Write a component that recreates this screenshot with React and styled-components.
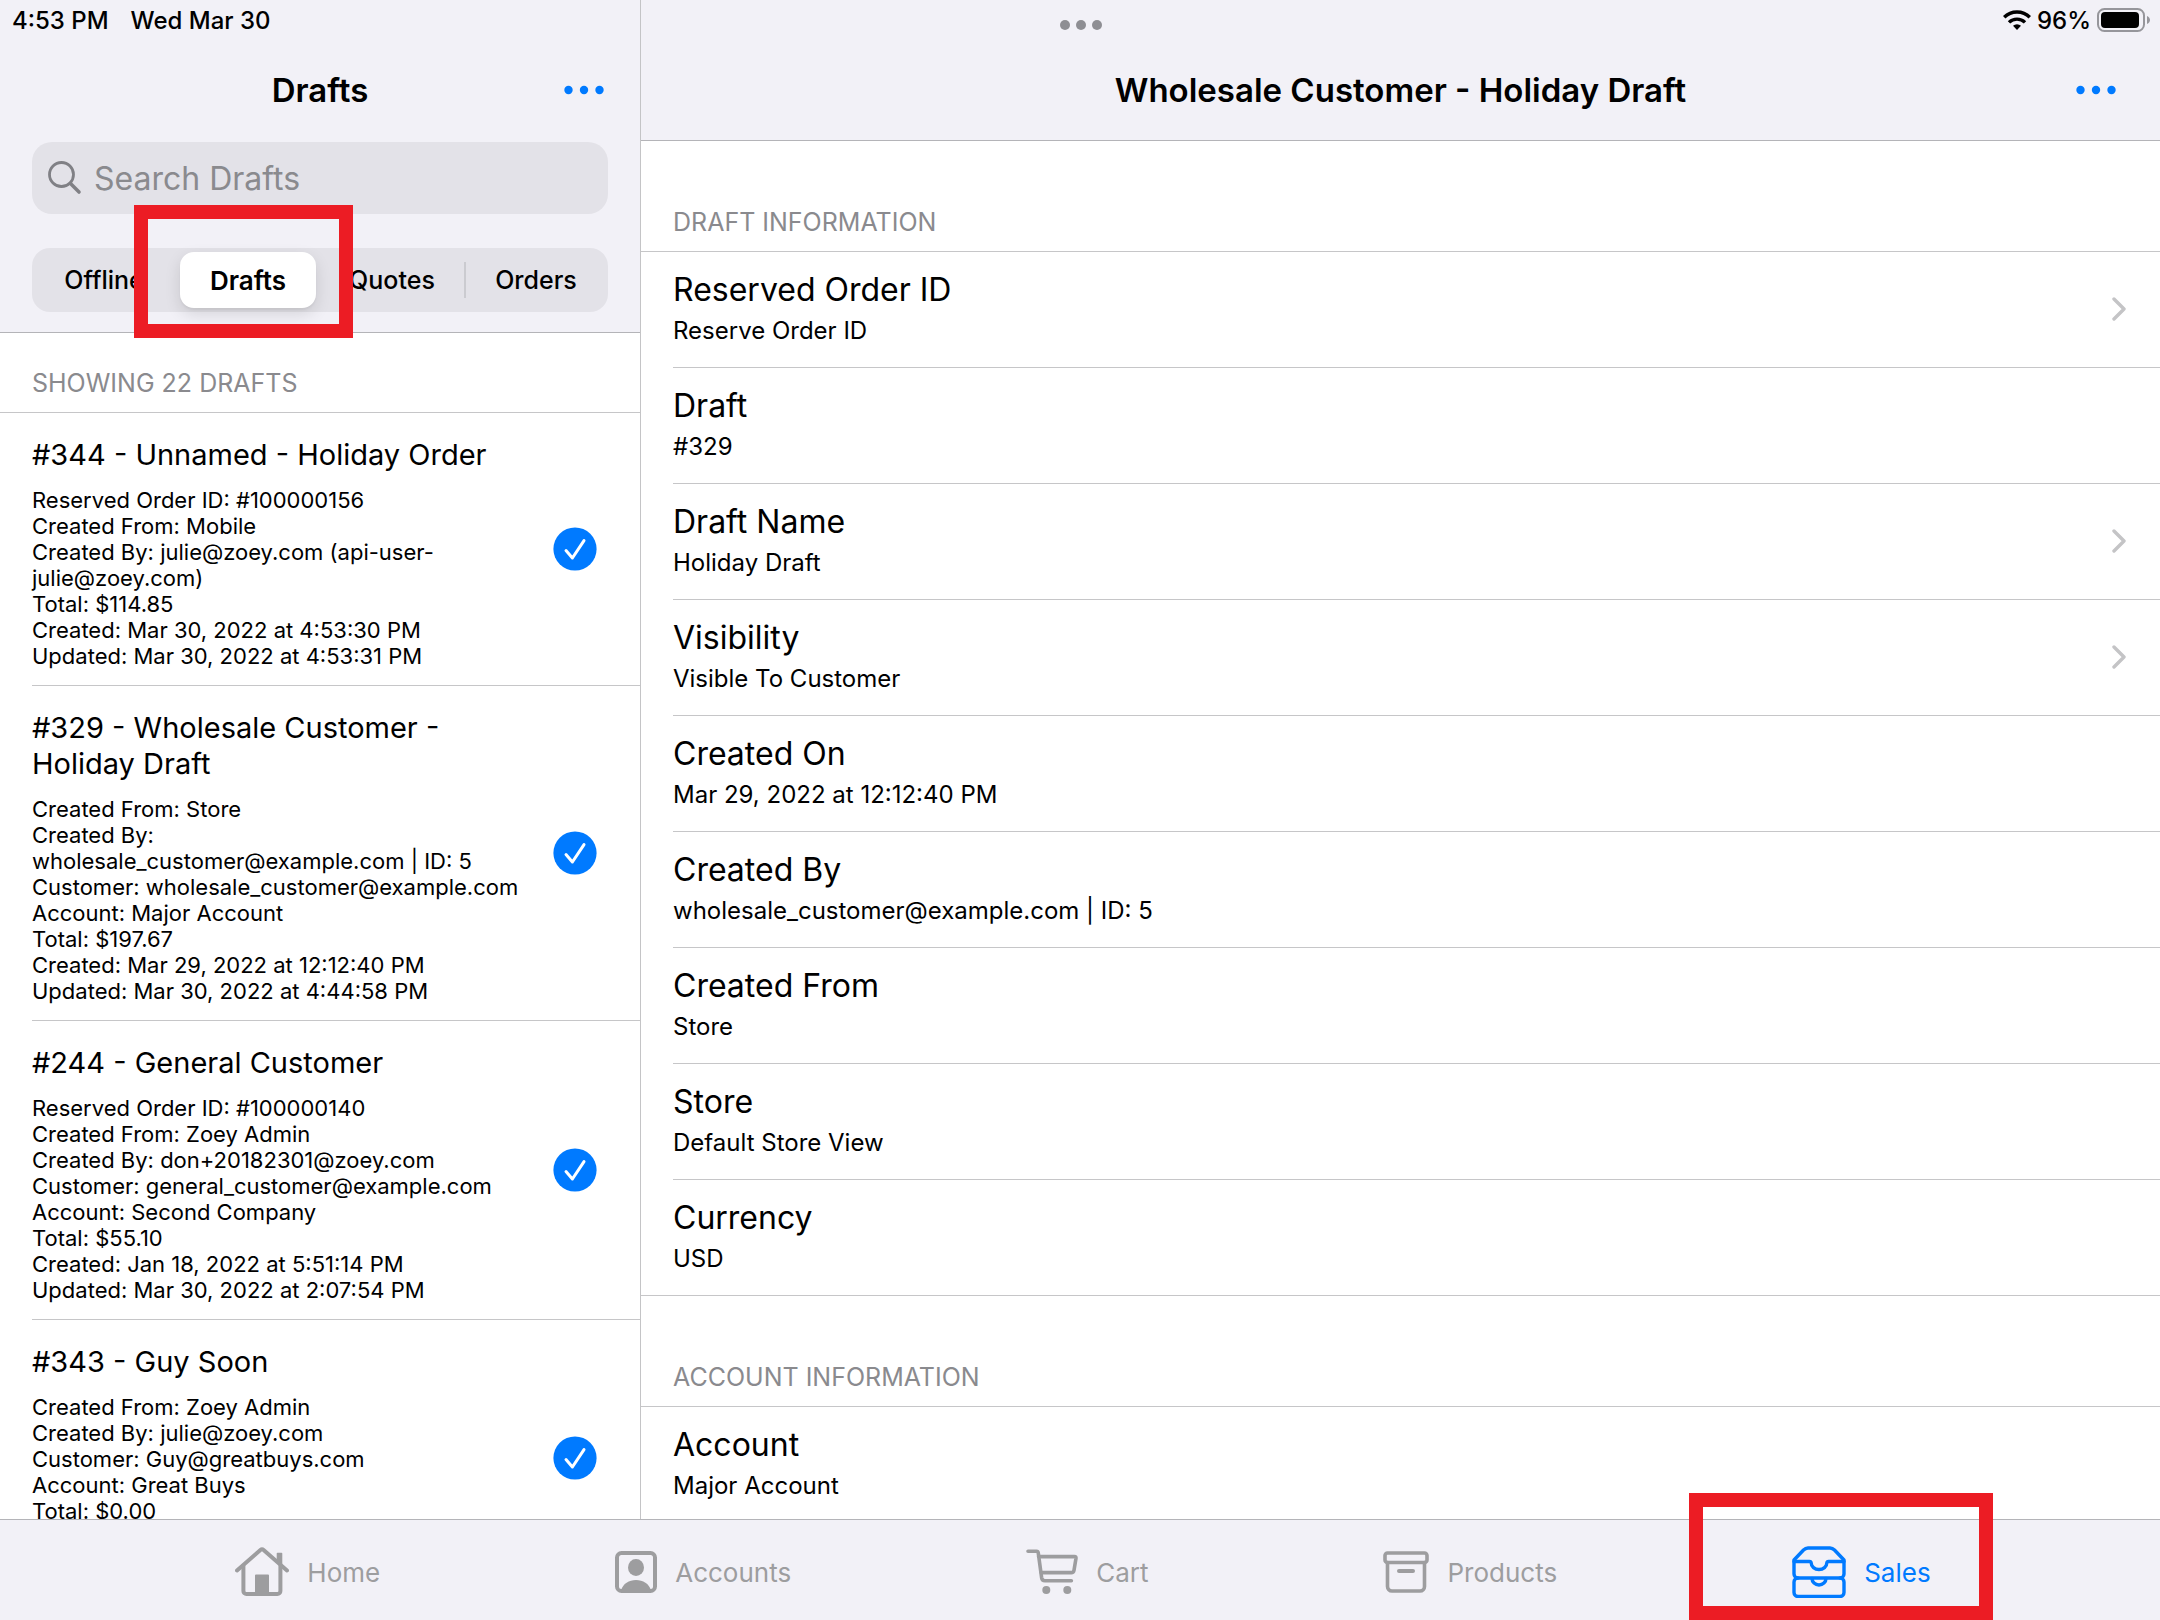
import React, { useState } from 'react'
import styled, { createGlobalStyle, css } from 'styled-components'

const GlobalStyle = createGlobalStyle`
    * {
        box-sizing: border-box;
    }
    body {
        margin: 0;
        background: #ffffff;
        color: #000000;
        font-family: Inter, "Liberation Sans", sans-serif;
    }
    button, input {
        font-family: inherit;
    }
    svg {
        flex-shrink: 0;
    }
`;

const Container = styled.div`
    position: relative;
    display: flex;
    flex-direction: column;
    height: 100vh;
    overflow: hidden;
`;

// status bar, floats over both panes
const StatusBar = styled.div`
    position: absolute;
    top: 0;
    left: 0;
    right: 0;
    z-index: 2;
    display: grid;
    grid-template-columns: 1fr auto 1fr;
    align-items: center;
    height: 40px;
    padding: 0 10px 0 12px;
    font-size: 24px;
    font-weight: 500;
`;
const StatusGroup = styled.div`
    display: flex;
    align-items: center;
    gap: ${(props) => props.gap}px;
    justify-content: ${(props) => (props.end ? "flex-end" : "flex-start")};
`;
const Grabber = styled.div`
    display: flex;
    gap: 6px;
    padding-top: 10px;
`;
const GrabberDot = styled.i`
    width: 10px;
    height: 10px;
    border-radius: 50%;
    background: #8e8e93;
`;

const Main = styled.div`
    flex: 1;
    min-height: 0;
    display: flex;
`;
const Sidebar = styled.aside`
    width: 641px;
    flex-shrink: 0;
    display: flex;
    flex-direction: column;
    border-right: 1px solid #c4c4c6;
`;
const Detail = styled.main`
    flex: 1;
    min-width: 0;
    display: flex;
    flex-direction: column;
`;

const SidebarTop = styled.div`
    background: #f2f1f7;
    border-bottom: 1px solid #b4b4b8;
    padding: 0 32px 20px;
`;
const Header = styled.header`
    display: grid;
    grid-template-columns: 48px 1fr 48px;
    align-items: center;
    height: ${(props) => (props.line ? 141 : 140)}px;
    padding-top: 40px;
    ${(props) => props.line && css`
        background: #f2f1f7;
        border-bottom: 1px solid #b4b4b8;
        padding-left: 40px;
        padding-right: 40px;
    `}
`;
const Title = styled.h1`
    grid-column: 2;
    margin: 0;
    text-align: center;
    font-size: 33px;
    font-weight: 600;
    white-space: nowrap;
`;
const More = styled.button`
    display: flex;
    justify-content: flex-end;
    padding: 16px 4px;
    border: 0;
    background: none;
`;

const SearchBox = styled.label`
    display: flex;
    align-items: center;
    gap: 12px;
    height: 72px;
    margin-top: 2px;
    padding: 0 16px;
    border-radius: 20px;
    background: #e3e2e8;
`;
const SearchInput = styled.input`
    flex: 1;
    min-width: 0;
    border: 0;
    outline: 0;
    padding: 0;
    background: none;
    font-size: 32px;
    &::placeholder {
        color: #8a8a8e;
        opacity: 1;
    }
`;

const Segments = styled.div`
    display: grid;
    grid-template-columns: repeat(4, 1fr);
    height: 64px;
    margin-top: 34px;
    border-radius: 18px;
    background: #e3e2e8;
`;
const SegmentSlot = styled.div`
    position: relative;
    display: flex;
    padding: 4px;
    ${(props) => props.divider && css`
        background: linear-gradient(#cbcbd0, #cbcbd0) left center / 2px 36px no-repeat;
    `}
`;
const Segment = styled.button`
    flex: 1;
    padding: 0;
    border: 0;
    border-radius: 14px;
    background: ${(props) => (props.active ? "#ffffff" : "none")};
    box-shadow: ${(props) => (props.active ? "0 6px 16px rgba(0, 0, 0, 0.12), 0 2px 2px rgba(0, 0, 0, 0.04)" : "none")};
    color: #000000;
    font-size: ${(props) => (props.active ? 26 : 25)}px;
    font-weight: ${(props) => (props.active ? 600 : 500)};
`;

const Marker = styled.div`
    position: absolute;
    z-index: 3;
    top: ${(props) => props.top}px;
    left: ${(props) => props.left}px;
    width: ${(props) => props.width}px;
    height: ${(props) => props.height}px;
    border: 14px solid #ec1c24;
    pointer-events: none;
`;

const Scroll = styled.div`
    flex: 1;
    min-height: 0;
    overflow: hidden;
`;
const SectionTitle = styled.h2`
    display: flex;
    align-items: flex-end;
    height: ${(props) => (props.small ? 80 : 111)}px;
    margin: 0;
    padding: 0 32px 14px;
    border-bottom: 1px solid #c6c6c8;
    color: #8a8a8e;
    font-size: 25px;
    line-height: 30px;
    font-weight: 400;
    text-transform: uppercase;
`;

const List = styled.ul`
    margin: 0;
    padding: 0;
    list-style: none;
`;
const DraftItem = styled.li`
    display: flex;
    align-items: center;
    justify-content: space-between;
    min-height: 276px;
    margin-left: 32px;
    padding-right: 43px;
    border-bottom: 1px solid #c6c6c8;
    &:first-child {
        min-height: 0;
    }
`;
const DraftText = styled.div`
    align-self: flex-start;
    width: 494px;
    padding: 24px 0 16px;
`;
const DraftTitle = styled.h3`
    margin: 0 0 14px;
    font-size: 29px;
    line-height: 36px;
    font-weight: 400;
`;
const DraftLine = styled.p`
    margin: 0;
    font-size: 22px;
    line-height: 26px;
`;

const InfoItem = styled.li`
    display: flex;
    align-items: center;
    justify-content: space-between;
    margin-left: ${(props) => (props.last ? 0 : 32)}px;
    padding: 18px 34px 20px ${(props) => (props.last ? 32 : 0)}px;
    border-bottom: 1px solid #c6c6c8;
`;
const InfoLabel = styled.div`
    font-size: 32px;
    line-height: 40px;
    margin-bottom: 5px;
`;
const InfoValue = styled.div`
    font-size: 24px;
    line-height: 32px;
`;

const TabBar = styled.nav`
    display: flex;
    justify-content: center;
    gap: 235px;
    flex-shrink: 0;
    height: 101px;
    padding-left: 6px;
    border-top: 1px solid #b4b4b8;
    background: #f2f1f7;
`;
const Tab = styled.a`
    position: relative;
    display: flex;
    align-items: center;
    gap: 18px;
    padding-top: 4px;
    color: ${(props) => (props.active ? "#007aff" : "#9d9d9f")};
    font-size: 26px;
    text-decoration: none;
`;

const Dots = () => (
    <svg width="40" height="10" viewBox="0 0 40 10" fill="#007aff">
        <circle cx="4.5" cy="5" r="4.2" />
        <circle cx="20" cy="5" r="4.2" />
        <circle cx="35.5" cy="5" r="4.2" />
    </svg>
);

const SearchIcon = () => (
    <svg width="34" height="34" viewBox="0 0 34 34" fill="none" stroke="#808085" strokeLinecap="round">
        <circle cx="13.5" cy="13.5" r="12" strokeWidth="2.8" />
        <path d="M22.5 22.5L31 31" strokeWidth="3.6" />
    </svg>
);

const WifiIcon = () => (
    <svg width="28" height="20" viewBox="0 0 28 20" fill="none" stroke="#000" strokeWidth="3.4">
        <path d="M1.2 7.3a18 18 0 0 1 25.6 0" />
        <path d="M6 12.4a11.4 11.4 0 0 1 16 0" />
        <path d="M14 20l-4-4.2a5.8 5.8 0 0 1 8 0z" fill="#000" stroke="none" />
    </svg>
);

const BatteryIcon = () => (
    <svg width="53" height="24" viewBox="0 0 53 24">
        <rect x="1" y="1" width="46" height="22" rx="6.5" fill="none" stroke="#96969b" strokeWidth="2" />
        <rect x="4" y="4" width="38" height="16" rx="4" fill="#000" />
        <path d="M50 8c4 2 4 6 0 8z" fill="#96969b" />
    </svg>
);

const CheckIcon = () => (
    <svg width="44" height="44" viewBox="0 0 44 44" fill="none">
        <circle cx="22" cy="22" r="21.6" fill="#007aff" />
        <path d="M13 23.6L19.4 31L31 13.6" stroke="#fff" strokeWidth="3" strokeLinecap="round" strokeLinejoin="round" />
    </svg>
);

const ChevronIcon = () => (
    <svg width="14" height="24" viewBox="0 0 14 24" fill="none" stroke="#c4c4c6" strokeWidth="3.4" strokeLinecap="round" strokeLinejoin="round">
        <path d="M2 2L12 12L2 22" />
    </svg>
);

const HomeIcon = () => (
    <svg width="54" height="50" viewBox="0 0 54 50" fill="none" stroke="currentColor" strokeWidth="4" strokeLinecap="round" strokeLinejoin="round">
        <path d="M2 23.5L25.4 3a2.4 2.4 0 0 1 3.2 0L52 23.5" />
        <path d="M8.4 19v25a3 3 0 0 0 3 3h31a3 3 0 0 0 3-3v-25" />
        <path d="M42.5 6.5h4v11l-4-3.6z" fill="currentColor" strokeWidth="1.6" />
        <path d="M21 28.5h12v18h-12z" fill="currentColor" strokeWidth="2" />
    </svg>
);

const AccountsIcon = () => (
    <svg width="42" height="42" viewBox="0 0 42 42" fill="none" stroke="currentColor">
        <rect x="2" y="2" width="38" height="38" rx="4.5" strokeWidth="4" />
        <ellipse cx="21" cy="16.5" rx="8" ry="8.5" fill="currentColor" stroke="none" />
        <path d="M6 39.5c2-7 8-10.5 15-10.5s13 3.5 15 10.5z" fill="currentColor" stroke="none" />
    </svg>
);

const CartIcon = () => (
    <svg width="52" height="46" viewBox="0 0 52 46" fill="none" stroke="currentColor" strokeWidth="3.6" strokeLinecap="round" strokeLinejoin="round">
        <path d="M2 2.2h8.6q1.4 0 1.6 1.4l3.4 25q.5 3.1 3.3 3.1h26.5" />
        <path d="M12.6 7.6h36q1.6 0 1.4 1.6l-2 12q-.4 2.4-2.8 2.4h-30" />
        <circle cx="20.3" cy="41" r="4" fill="currentColor" stroke="none" />
        <circle cx="41.3" cy="41" r="4" fill="currentColor" stroke="none" />
    </svg>
);

const ProductsIcon = () => (
    <svg width="46" height="42" viewBox="0 0 46 42" fill="none" stroke="currentColor" strokeWidth="3.6" strokeLinecap="round" strokeLinejoin="round">
        <rect x="2" y="2" width="42" height="9.5" rx="2.5" />
        <path d="M4.5 11.5v24a4.5 4.5 0 0 0 4.5 4.5h28a4.5 4.5 0 0 0 4.5-4.5v-24" />
        <path d="M16 20h14" strokeWidth="4" />
    </svg>
);

const SalesIcon = () => (
    <svg width="54" height="52" viewBox="0 0 54 52" fill="none" stroke="currentColor" strokeWidth="3.4" strokeLinecap="round" strokeLinejoin="round">
        <path d="M2 14v14a4 4 0 0 0 4 4h42a4 4 0 0 0 4-4v-14l-9.5-10c-1.4-1.4-2.8-2-4.5-2h-22c-1.7 0-3.1.6-4.5 2z" />
        <path d="M2 15.5h15.5q1.5 0 1.7 1.5a7.8 6.5 0 0 0 15.6 0q.2-1.5 1.7-1.5h15.5" />
        <path d="M6 32a4 4 0 0 0-4 4v10.5a4 4 0 0 0 4 4h42a4 4 0 0 0 4-4v-10.5a4 4 0 0 0-4-4" />
        <path d="M20 32.5a7 6.5 0 0 0 14 0" />
    </svg>
);

const segments = ["Offline", "Drafts", "Quotes", "Orders"];

const drafts = [
    {
        title: "#344 - Unnamed - Holiday Order",
        lines: [
            "Reserved Order ID: #100000156",
            "Created From: Mobile",
            "Created By: julie@zoey.com (api-user-julie@zoey.com)",
            "Total: $114.85",
            "Created: Mar 30, 2022 at 4:53:30 PM",
            "Updated: Mar 30, 2022 at 4:53:31 PM",
        ],
    },
    {
        title: "#329 - Wholesale Customer - Holiday Draft",
        lines: [
            "Created From: Store",
            "Created By: wholesale_customer@example.com | ID: 5",
            "Customer: wholesale_customer@example.com",
            "Account: Major Account",
            "Total: $197.67",
            "Created: Mar 29, 2022 at 12:12:40 PM",
            "Updated: Mar 30, 2022 at 4:44:58 PM",
        ],
    },
    {
        title: "#244 - General Customer",
        lines: [
            "Reserved Order ID: #100000140",
            "Created From: Zoey Admin",
            "Created By: don+20182301@zoey.com",
            "Customer: general_customer@example.com",
            "Account: Second Company",
            "Total: $55.10",
            "Created: Jan 18, 2022 at 5:51:14 PM",
            "Updated: Mar 30, 2022 at 2:07:54 PM",
        ],
    },
    {
        title: "#343 - Guy Soon",
        lines: [
            "Created From: Zoey Admin",
            "Created By: julie@zoey.com",
            "Customer: Guy@greatbuys.com",
            "Account: Great Buys",
            "Total: $0.00",
        ],
    },
];

const draftInfo = [
    { label: "Reserved Order ID", value: "Reserve Order ID", link: true },
    { label: "Draft", value: "#329" },
    { label: "Draft Name", value: "Holiday Draft", link: true },
    { label: "Visibility", value: "Visible To Customer", link: true },
    { label: "Created On", value: "Mar 29, 2022 at 12:12:40 PM" },
    { label: "Created By", value: "wholesale_customer@example.com | ID: 5" },
    { label: "Created From", value: "Store" },
    { label: "Store", value: "Default Store View" },
    { label: "Currency", value: "USD" },
];

const accountInfo = [{ label: "Account", value: "Major Account" }];

const tabs = [
    { name: "Home", icon: <HomeIcon/> },
    { name: "Accounts", icon: <AccountsIcon/> },
    { name: "Cart", icon: <CartIcon/> },
    { name: "Products", icon: <ProductsIcon/> },
    { name: "Sales", icon: <SalesIcon/>, active: true },
];

const InfoList = ({ items }) => (
    <List>
        {items.map((item, i) => (
            <InfoItem key={item.label} last={i === items.length - 1}>
                <div>
                    <InfoLabel>{item.label}</InfoLabel>
                    <InfoValue>{item.value}</InfoValue>
                </div>
                {item.link && <ChevronIcon/>}
            </InfoItem>
        ))}
    </List>
);

const App = () => {
    const [segment, setSegment] = useState("Drafts");
    const [search, setSearch] = useState("");

  return (
    <Container>
        <GlobalStyle/>
        <StatusBar>
            <StatusGroup gap={22}>
                <span>4:53 PM</span>
                <span>Wed Mar 30</span>
            </StatusGroup>
            <Grabber><GrabberDot/><GrabberDot/><GrabberDot/></Grabber>
            <StatusGroup gap={6} end>
                <WifiIcon/>
                <span>96%</span>
                <BatteryIcon/>
            </StatusGroup>
        </StatusBar>
        <Main>
            <Sidebar>
                <SidebarTop>
                    <Header>
                        <Title>Drafts</Title>
                        <More aria-label="More"><Dots/></More>
                    </Header>
                    <SearchBox>
                        <SearchIcon/>
                        <SearchInput
                            aria-label="Search Drafts"
                            placeholder="Search Drafts"
                            value={search}
                            onChange={(e)=>setSearch(e.target.value)}
                        />
                    </SearchBox>
                    <Segments>
                        {segments.map((name) => (
                            <SegmentSlot key={name} divider={name === "Orders"}>
                                <Segment active={segment === name} onClick={()=>setSegment(name)}>{name}</Segment>
                                {name === "Drafts" && <Marker top={-43} left={-42} width={219} height={133}/>}
                            </SegmentSlot>
                        ))}
                    </Segments>
                </SidebarTop>
                <Scroll>
                    <SectionTitle small>Showing 22 Drafts</SectionTitle>
                    <List>
                        {drafts.map((draft) => (
                            <DraftItem key={draft.title}>
                                <DraftText>
                                    <DraftTitle>{draft.title}</DraftTitle>
                                    {draft.lines.map((line) => <DraftLine key={line}>{line}</DraftLine>)}
                                </DraftText>
                                <CheckIcon/>
                            </DraftItem>
                        ))}
                    </List>
                </Scroll>
            </Sidebar>
            <Detail>
                <Header line>
                    <Title>Wholesale Customer - Holiday Draft</Title>
                    <More aria-label="More"><Dots/></More>
                </Header>
                <Scroll>
                    <SectionTitle>Draft Information</SectionTitle>
                    <InfoList items={draftInfo}/>
                    <SectionTitle>Account Information</SectionTitle>
                    <InfoList items={accountInfo}/>
                </Scroll>
            </Detail>
        </Main>
        <TabBar>
            {tabs.map((tab) => (
                <Tab key={tab.name} href="#" active={tab.active}>
                    {tab.icon}
                    {tab.name}
                    {tab.active && <Marker top={-27} left={-103} width={304} height={127}/>}
                </Tab>
            ))}
        </TabBar>
    </Container>
  )
}

export default App
